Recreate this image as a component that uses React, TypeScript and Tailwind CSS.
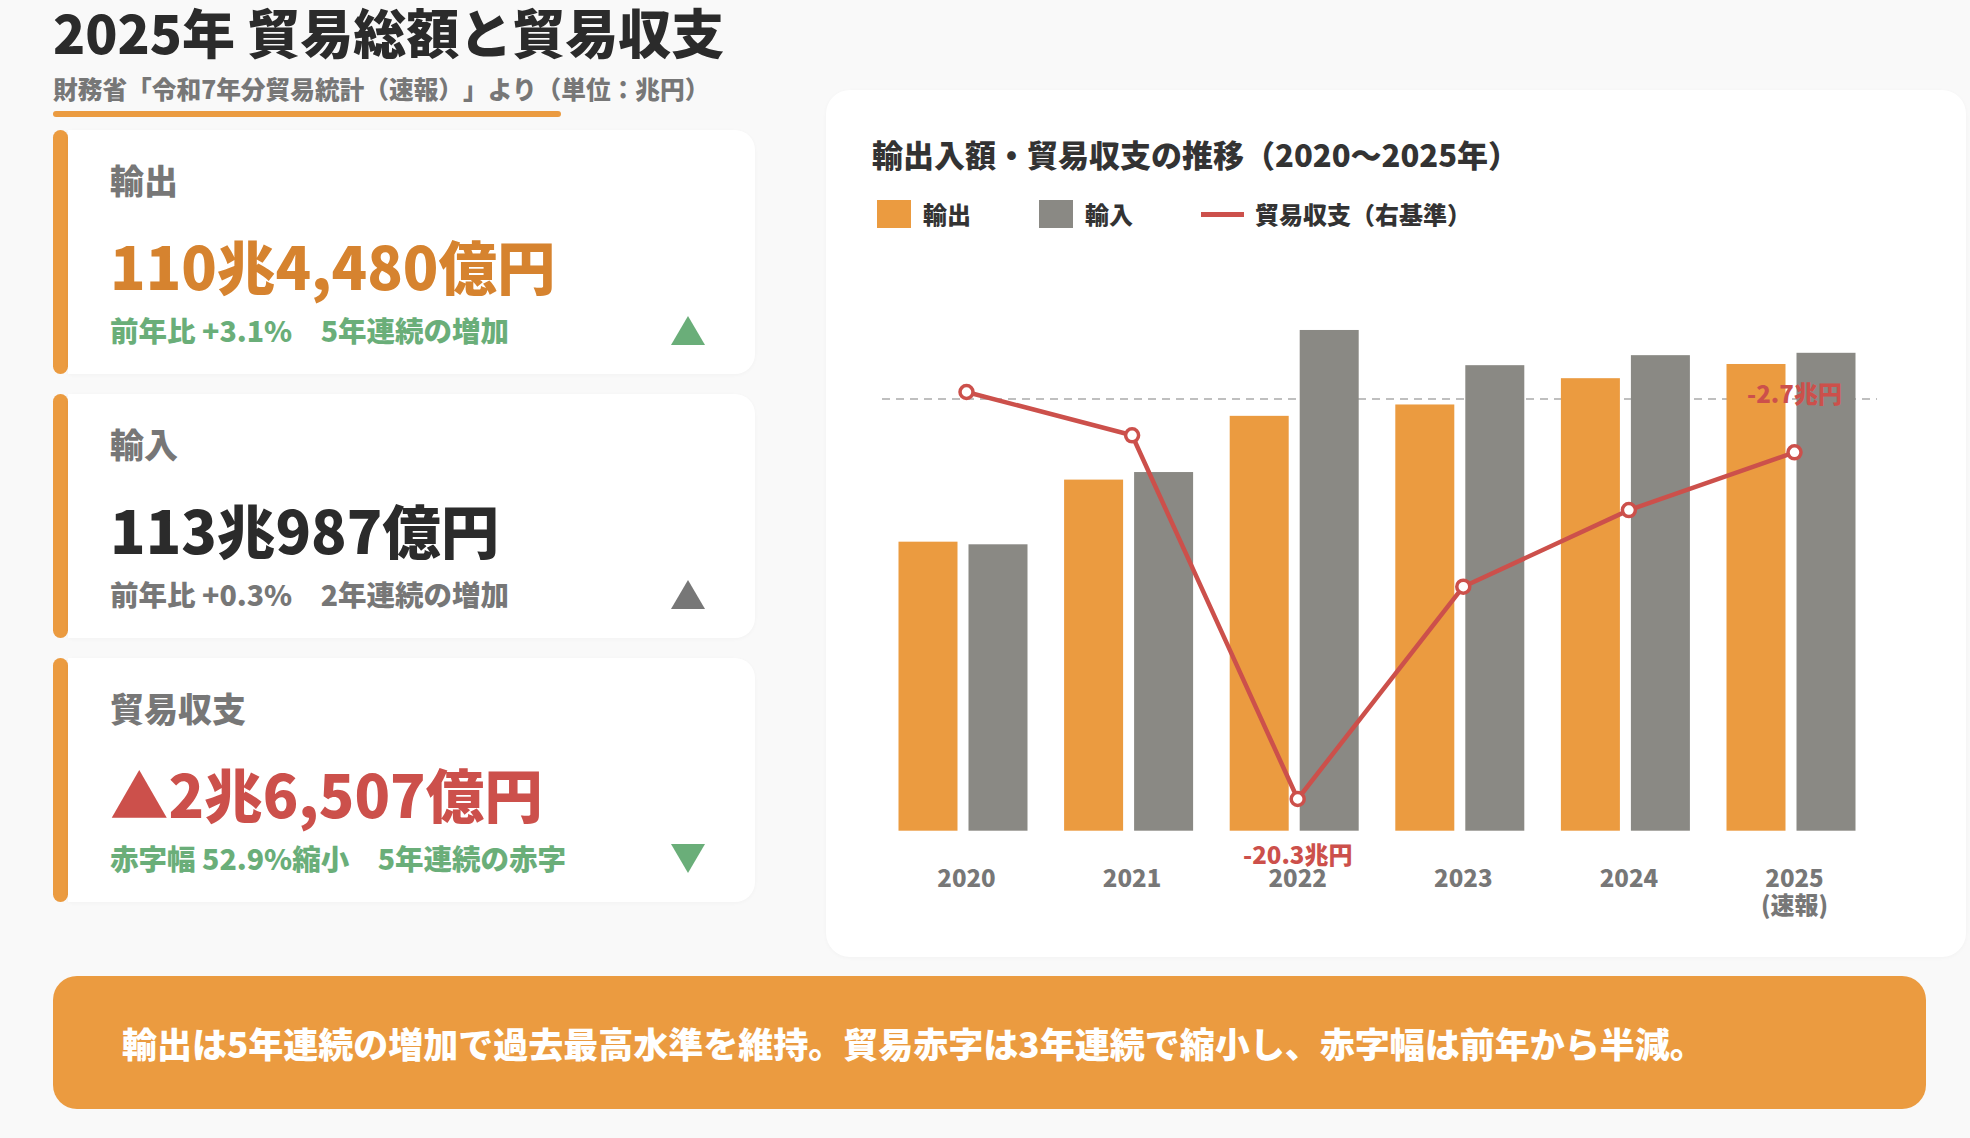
import React from "react";

const ORANGE = "#eb9b40";
const GRAY = "#8a8984";
const RED = "#cc504b";

// chart data (兆円)
const years = ["2020", "2021", "2022", "2023", "2024", "2025"];
const exportsT = [68.4, 83.09, 98.18, 100.87, 107.09, 110.45];
const importsT = [67.78, 84.88, 118.5, 110.17, 112.54, 113.1];
const balanceY = [142, 185.3, 549, 336.7, 260.1, 202.3];

const BASE = 580.7;
const SCALE = 4.2255;
const cx = (i: number) => 94.5 + 165.6 * i;

const Triangle = ({ color, down }: { color: string; down?: boolean }) => (
  <svg width="34" height="29" viewBox="0 0 34 29" className="shrink-0">
    {down ? (
      <polygon points="0,0 34,0 17,29" fill={color} />
    ) : (
      <polygon points="17,0 34,29 0,29" fill={color} />
    )}
  </svg>
);

interface StatCardProps {
  label: string;
  value: string;
  valueColor: string;
  note: string;
  noteColor: string;
  arrowColor: string;
  down?: boolean;
}

const StatCard: React.FC<StatCardProps> = ({ label, value, valueColor, note, noteColor, arrowColor, down }) => (
  <div className="flex h-[244px]">
    <div className="w-[15px] shrink-0 rounded-full bg-[#eb9b40]" />
    <div className="flex-1 bg-white rounded-r-[20px] pl-[42px] pr-[50px] pt-[33px] shadow-[0_1px_4px_rgba(0,0,0,0.03)]">
      <div className="text-[34px] leading-none font-black text-[#777777]">{label}</div>
      <div className={`mt-[39px] text-[58.5px] leading-none font-black ${valueColor}`}>{value}</div>
      <div className="mt-[21px] flex items-center justify-between">
        <span className={`text-[28.5px] leading-none font-black whitespace-pre ${noteColor}`}>{note}</span>
        <Triangle color={arrowColor} down={down} />
      </div>
    </div>
  </div>
);

const TradeChart = () => (
  <svg width="1048" height="680" viewBox="0 0 1048 680" className="block">
    <line x1="10" y1="149" x2="1005" y2="149" stroke="#aaaaaa" strokeWidth="1.6" strokeDasharray="8 6" />
    {years.map((y, i) => {
      const eh = exportsT[i] * SCALE;
      const ih = importsT[i] * SCALE;
      return (
        <g key={y}>
          <rect x={cx(i) - 68} y={BASE - eh} width="59" height={eh} fill={ORANGE} />
          <rect x={cx(i) + 2} y={BASE - ih} width="59" height={ih} fill={GRAY} />
        </g>
      );
    })}
    <polyline
      points={years.map((_, i) => `${cx(i)},${balanceY[i]}`).join(" ")}
      fill="none"
      stroke={RED}
      strokeWidth="4.5"
      strokeLinejoin="round"
    />
    {years.map((y, i) => (
      <circle key={y} cx={cx(i)} cy={balanceY[i]} r="6.5" fill="white" stroke={RED} strokeWidth="3.5" />
    ))}
    <g fontWeight="900" fontSize="24" textAnchor="middle" fill={RED}>
      <text x={cx(2)} y="614">-20.3兆円</text>
      <text x={cx(5)} y="153">-2.7兆円</text>
    </g>
    <g fontWeight="900" fontSize="24" textAnchor="middle" fill="#777777">
      {years.map((y, i) => (
        <text key={y} x={cx(i)} y="637">{y}</text>
      ))}
      <text x={cx(5)} y="664">(速報)</text>
    </g>
  </svg>
);

export default function App() {
  return (
    <div className="min-h-screen w-full overflow-hidden bg-[#f9f9f9] font-['Noto_Sans_CJK_JP','Noto_Sans',sans-serif] [text-spacing-trim:space-all]">
      <div className="w-[1873px] ml-[53px]">
        <div className="flex items-start gap-[71px]">
          {/* left column */}
          <div className="w-[702px] shrink-0">
            <h1 className="text-[53px] leading-[1.2] font-black text-[#2b2b2b]">2025年 貿易総額と貿易収支</h1>
            <p className="mt-[12px] text-[24.7px] leading-none font-black text-[#777777]">
              財務省「令和7年分貿易統計（速報）」より（単位：兆円）
            </p>
            <div className="mt-[11px] w-[508px] h-[6px] rounded-full bg-[#eb9b40]" />
            <div className="mt-[13px] flex flex-col gap-[20px]">
              <StatCard
                label="輸出"
                value="110兆4,480億円"
                valueColor="text-[#d6832f]"
                note={"前年比 +3.1%　5年連続の増加"}
                noteColor="text-[#6aae79]"
                arrowColor="#6aae79"
              />
              <StatCard
                label="輸入"
                value="113兆987億円"
                valueColor="text-[#2b2b2b]"
                note={"前年比 +0.3%　2年連続の増加"}
                noteColor="text-[#777777]"
                arrowColor="#777777"
              />
              <StatCard
                label="貿易収支"
                value="▲2兆6,507億円"
                valueColor="text-[#cc504b]"
                note={"赤字幅 52.9%縮小　5年連続の赤字"}
                noteColor="text-[#6aae79]"
                arrowColor="#6aae79"
                down
              />
            </div>
          </div>

          {/* chart card */}
          <div className="mt-[90px] w-[1140px] h-[867px] shrink-0 rounded-[24px] bg-white pl-[46px] pt-[48px] shadow-[0_1px_4px_rgba(0,0,0,0.03)]">
            <h2 className="text-[31px] leading-none font-black text-[#333333]">
              輸出入額・貿易収支の推移（2020〜2025年）
            </h2>
            <div className="mt-[31px] ml-[5px] flex items-center gap-[68px] text-[24px] leading-none font-black text-[#333333]">
              <div className="flex items-center gap-[12px]">
                <span className="w-[34px] h-[28px] bg-[#eb9b40]" />
                <span>輸出</span>
              </div>
              <div className="flex items-center gap-[12px]">
                <span className="w-[34px] h-[28px] bg-[#8a8984]" />
                <span>輸入</span>
              </div>
              <div className="flex items-center gap-[11px]">
                <span className="w-[43px] h-[5px] bg-[#cc504b]" />
                <span>貿易収支（右基準）</span>
              </div>
            </div>
            <div className="mt-[22px]">
              <TradeChart />
            </div>
          </div>
        </div>

        {/* summary banner */}
        <div className="mt-[19px] h-[133px] rounded-[24px] bg-[#eb9b40] flex items-center pl-[69px]">
          <p className="text-[35px] leading-none font-black text-white">
            輸出は5年連続の増加で過去最高水準を維持。貿易赤字は3年連続で縮小し、赤字幅は前年から半減。
          </p>
        </div>
      </div>
    </div>
  );
}
